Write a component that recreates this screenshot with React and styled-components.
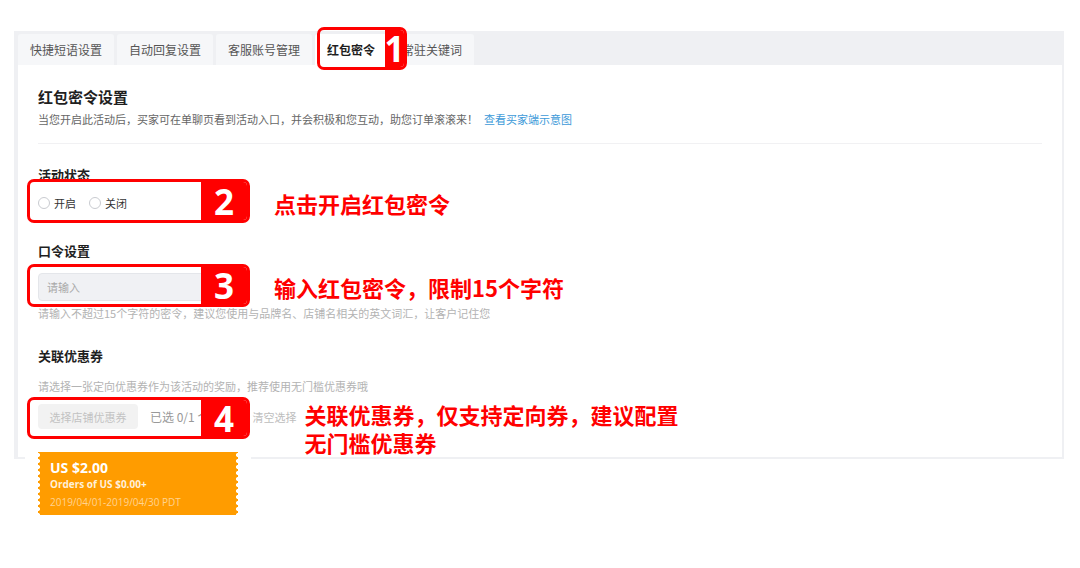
import React from 'react';
import styled, { createGlobalStyle } from 'styled-components';

// Page-wide reset and default font
const GlobalStyle = createGlobalStyle`
  html, body {
    margin: 0;
    padding: 0;
    background: #fff;
  }
  body {
    font-family: "Noto Sans CJK SC", "Noto Sans", sans-serif;
    color: #333;
  }
  * {
    box-sizing: border-box;
  }
`;

const Page = styled.div`
  width: 1080px;
  height: 568px;
  padding: 31px 0 0 14px;
  overflow: hidden;
`;

// Gray shell around the tabs and the white card
const Shell = styled.div`
  width: 1050px;
  background: #eff0f3;
  padding: 0 2px 2px 4px;
`;

const TabBar = styled.div`
  display: flex;
  align-items: flex-end;
  gap: 3px;
  height: 34px;
`;

const Tab = styled.div`
  position: relative;
  z-index: ${(p) => (p.$active ? 2 : 1)};
  height: 31px;
  padding: 0 12px;
  display: flex;
  align-items: center;
  font-size: 12px;
  white-space: nowrap;
  border-radius: 3px 3px 0 0;
  background: ${(p) => (p.$active ? '#fff' : '#f6f7f9')};
  color: ${(p) => (p.$active ? '#1f1f1f' : '#555')};
  font-weight: ${(p) => (p.$active ? 700 : 400)};
`;

const Card = styled.div`
  position: relative;
  height: 392px;
  background: #fff;
  padding: 22px 20px 0;
`;

const Title = styled.h2`
  margin: 0;
  font-size: 15px;
  line-height: 20px;
  font-weight: 700;
  color: #1f1f1f;
`;

const Description = styled.p`
  margin: 4px 0 0;
  font-size: 11px;
  line-height: 16px;
  color: #666;
  white-space: nowrap;
`;

const DemoLink = styled.a`
  margin-left: 6px;
  color: #3d9ad9;
  text-decoration: none;
`;

const Divider = styled.div`
  margin-top: 16px;
  height: 1px;
  background: #f1f1f3;
`;

const SectionLabel = styled.div`
  margin-top: ${(p) => p.$mt}px;
  font-size: 13px;
  line-height: 18px;
  font-weight: 700;
  color: #1f1f1f;
`;

const Helper = styled.div`
  margin-top: ${(p) => p.$mt}px;
  font-size: 11px;
  line-height: 16px;
  color: #b3b3b3;
  white-space: nowrap;
`;

const Row = styled.div`
  position: relative;
  display: flex;
  align-items: center;
  margin-top: ${(p) => p.$mt}px;
  height: ${(p) => p.$h}px;
`;

const Field = styled.div`
  display: flex;
  align-items: center;
  width: 236px;
  flex-shrink: 0;
`;

const Radio = styled.span`
  width: 12px;
  height: 12px;
  border: 1px solid #c9cbd0;
  border-radius: 50%;
  background: #fff;
  flex-shrink: 0;
`;

const RadioText = styled.span`
  margin: 0 13px 0 4px;
  font-size: 11px;
  color: #333;
`;

const TextInput = styled.input`
  width: 200px;
  height: 28px;
  padding: 0 8px;
  border: 1px solid #e4e6ea;
  border-radius: 4px;
  background: #f0f1f4;
  font-family: inherit;
  font-size: 11px;
  outline: none;

  &::placeholder {
    color: #a9a9a9;
  }
`;

const GhostButton = styled.div`
  width: 100px;
  height: 25px;
  border-radius: 4px;
  background: #f2f2f2;
  display: flex;
  align-items: center;
  justify-content: center;
  font-size: 11px;
  color: #c2c2c2;
  flex-shrink: 0;
`;

const Selected = styled.span`
  margin-left: 12px;
  font-size: 12px;
  color: #999;
  white-space: nowrap;
`;

const ClearLink = styled.span`
  margin-left: 43px;
  font-size: 11px;
  color: #bdbdbd;
  white-space: nowrap;
`;

// Red annotation text beside a marked field
const Note = styled.div`
  color: #f00;
  font-size: 22px;
  line-height: 28px;
  font-weight: 700;
  white-space: nowrap;
  margin-left: ${(p) => p.$ml || 0}px;
  align-self: ${(p) => (p.$top ? 'flex-start' : 'center')};
  margin-top: ${(p) => (p.$top ? -4 : 0)}px;
`;

// Red numbered frame laid over a field
const Frame = styled.div`
  position: absolute;
  z-index: 5;
  left: ${(p) => p.$x}px;
  top: ${(p) => p.$y}px;
  width: ${(p) => p.$w}px;
  height: ${(p) => p.$h}px;
  border: 3px solid #f00;
  border-radius: 7px;
  overflow: hidden;
  display: flex;
  justify-content: flex-end;
  pointer-events: none;
`;

const Badge = styled.div`
  width: ${(p) => p.$w}px;
  height: 100%;
  background: #f00;
  color: #fff;
  font-family: "Open Sans", "Noto Sans", sans-serif;
  font-size: 35px;
  font-weight: 700;
  line-height: 1;
  display: flex;
  align-items: center;
  justify-content: center;
`;

const CouponHolder = styled.div`
  position: relative;
  z-index: 2;
  width: 226px;
  margin: 17px 0 0 -13px;
  padding: 6px 13px 6px;
  background: #fff;
`;

const Coupon = styled.div`
  position: relative;
  width: 200px;
  height: 63px;
  padding: 7px 12px 0;
  background: #ff9c00;
  color: #fff;
  font-family: "Open Sans", "Noto Sans", sans-serif;

  &::before,
  &::after {
    content: '';
    position: absolute;
    top: 0;
    bottom: 0;
    width: 3px;
    background-size: 3px 6px;
    background-repeat: repeat-y;
  }
  &::before {
    left: 0;
    background-image: radial-gradient(circle at 0 50%, #fff 1.8px, transparent 2.3px);
  }
  &::after {
    right: 0;
    background-image: radial-gradient(circle at 100% 50%, #fff 1.8px, transparent 2.3px);
  }
`;

const Amount = styled.div`
  font-size: 14px;
  line-height: 18px;
  font-weight: 700;
`;

const Threshold = styled.div`
  font-size: 10px;
  line-height: 14px;
  font-weight: 700;
  color: #fff0d9;
`;

const Period = styled.div`
  margin-top: 4px;
  font-size: 10px;
  line-height: 14px;
  color: #ffd391;
`;

const tabs = ['快捷短语设置', '自动回复设置', '客服账号管理', '红包密令', '常驻关键词'];

export default function App() {
  return (
    <Page>
      <GlobalStyle />
      <Shell>
        <TabBar>
          {tabs.map((t) => (
            <Tab key={t} $active={t === '红包密令'}>
              {t}
              {t === '红包密令' && (
                <Frame $x={2} $y={-7} $w={90} $h={43}>
                  <Badge $w={19}>1</Badge>
                </Frame>
              )}
            </Tab>
          ))}
        </TabBar>

        <Card>
          <Title>红包密令设置</Title>
          <Description>
            当您开启此活动后，买家可在单聊页看到活动入口，并会积极和您互动，助您订单滚滚来！
            <DemoLink href="#">查看买家端示意图</DemoLink>
          </Description>
          <Divider />

          <SectionLabel $mt={22}>活动状态</SectionLabel>
          <Row $mt={9} $h={20}>
            <Field>
              <Radio />
              <RadioText>开启</RadioText>
              <Radio />
              <RadioText>关闭</RadioText>
            </Field>
            <Note>点击开启红包密令</Note>
            <Frame $x={-11} $y={-14} $w={223} $h={44}>
              <Badge $w={46}>2</Badge>
            </Frame>
          </Row>

          <SectionLabel $mt={29}>口令设置</SectionLabel>
          <Row $mt={13} $h={28}>
            <Field>
              <TextInput placeholder="请输入" />
            </Field>
            <Note>输入红包密令，限制15个字符</Note>
            <Frame $x={-11} $y={-9} $w={223} $h={43}>
              <Badge $w={46}>3</Badge>
            </Frame>
          </Row>
          <Helper $mt={4}>
            请输入不超过15个字符的密令，建议您使用与品牌名、店铺名相关的英文词汇，让客户记住您
          </Helper>

          <SectionLabel $mt={26}>关联优惠券</SectionLabel>
          <Helper $mt={13}>请选择一张定向优惠券作为该活动的奖励，推荐使用无门槛优惠券哦</Helper>
          <Row $mt={10} $h={25}>
            <GhostButton>选择店铺优惠券</GhostButton>
            <Selected>已选 0/1 个</Selected>
            <ClearLink>清空选择</ClearLink>
            <Note $ml={8} $top>
              关联优惠券，仅支持定向券，建议配置
              <br />
              无门槛优惠券
            </Note>
            <Frame $x={-11} $y={-7} $w={223} $h={42}>
              <Badge $w={46}>4</Badge>
            </Frame>
          </Row>

          <CouponHolder>
            <Coupon>
              <Amount>US $2.00</Amount>
              <Threshold>Orders of US $0.00+</Threshold>
              <Period>2019/04/01-2019/04/30 PDT</Period>
            </Coupon>
          </CouponHolder>
        </Card>
      </Shell>
    </Page>
  );
}
